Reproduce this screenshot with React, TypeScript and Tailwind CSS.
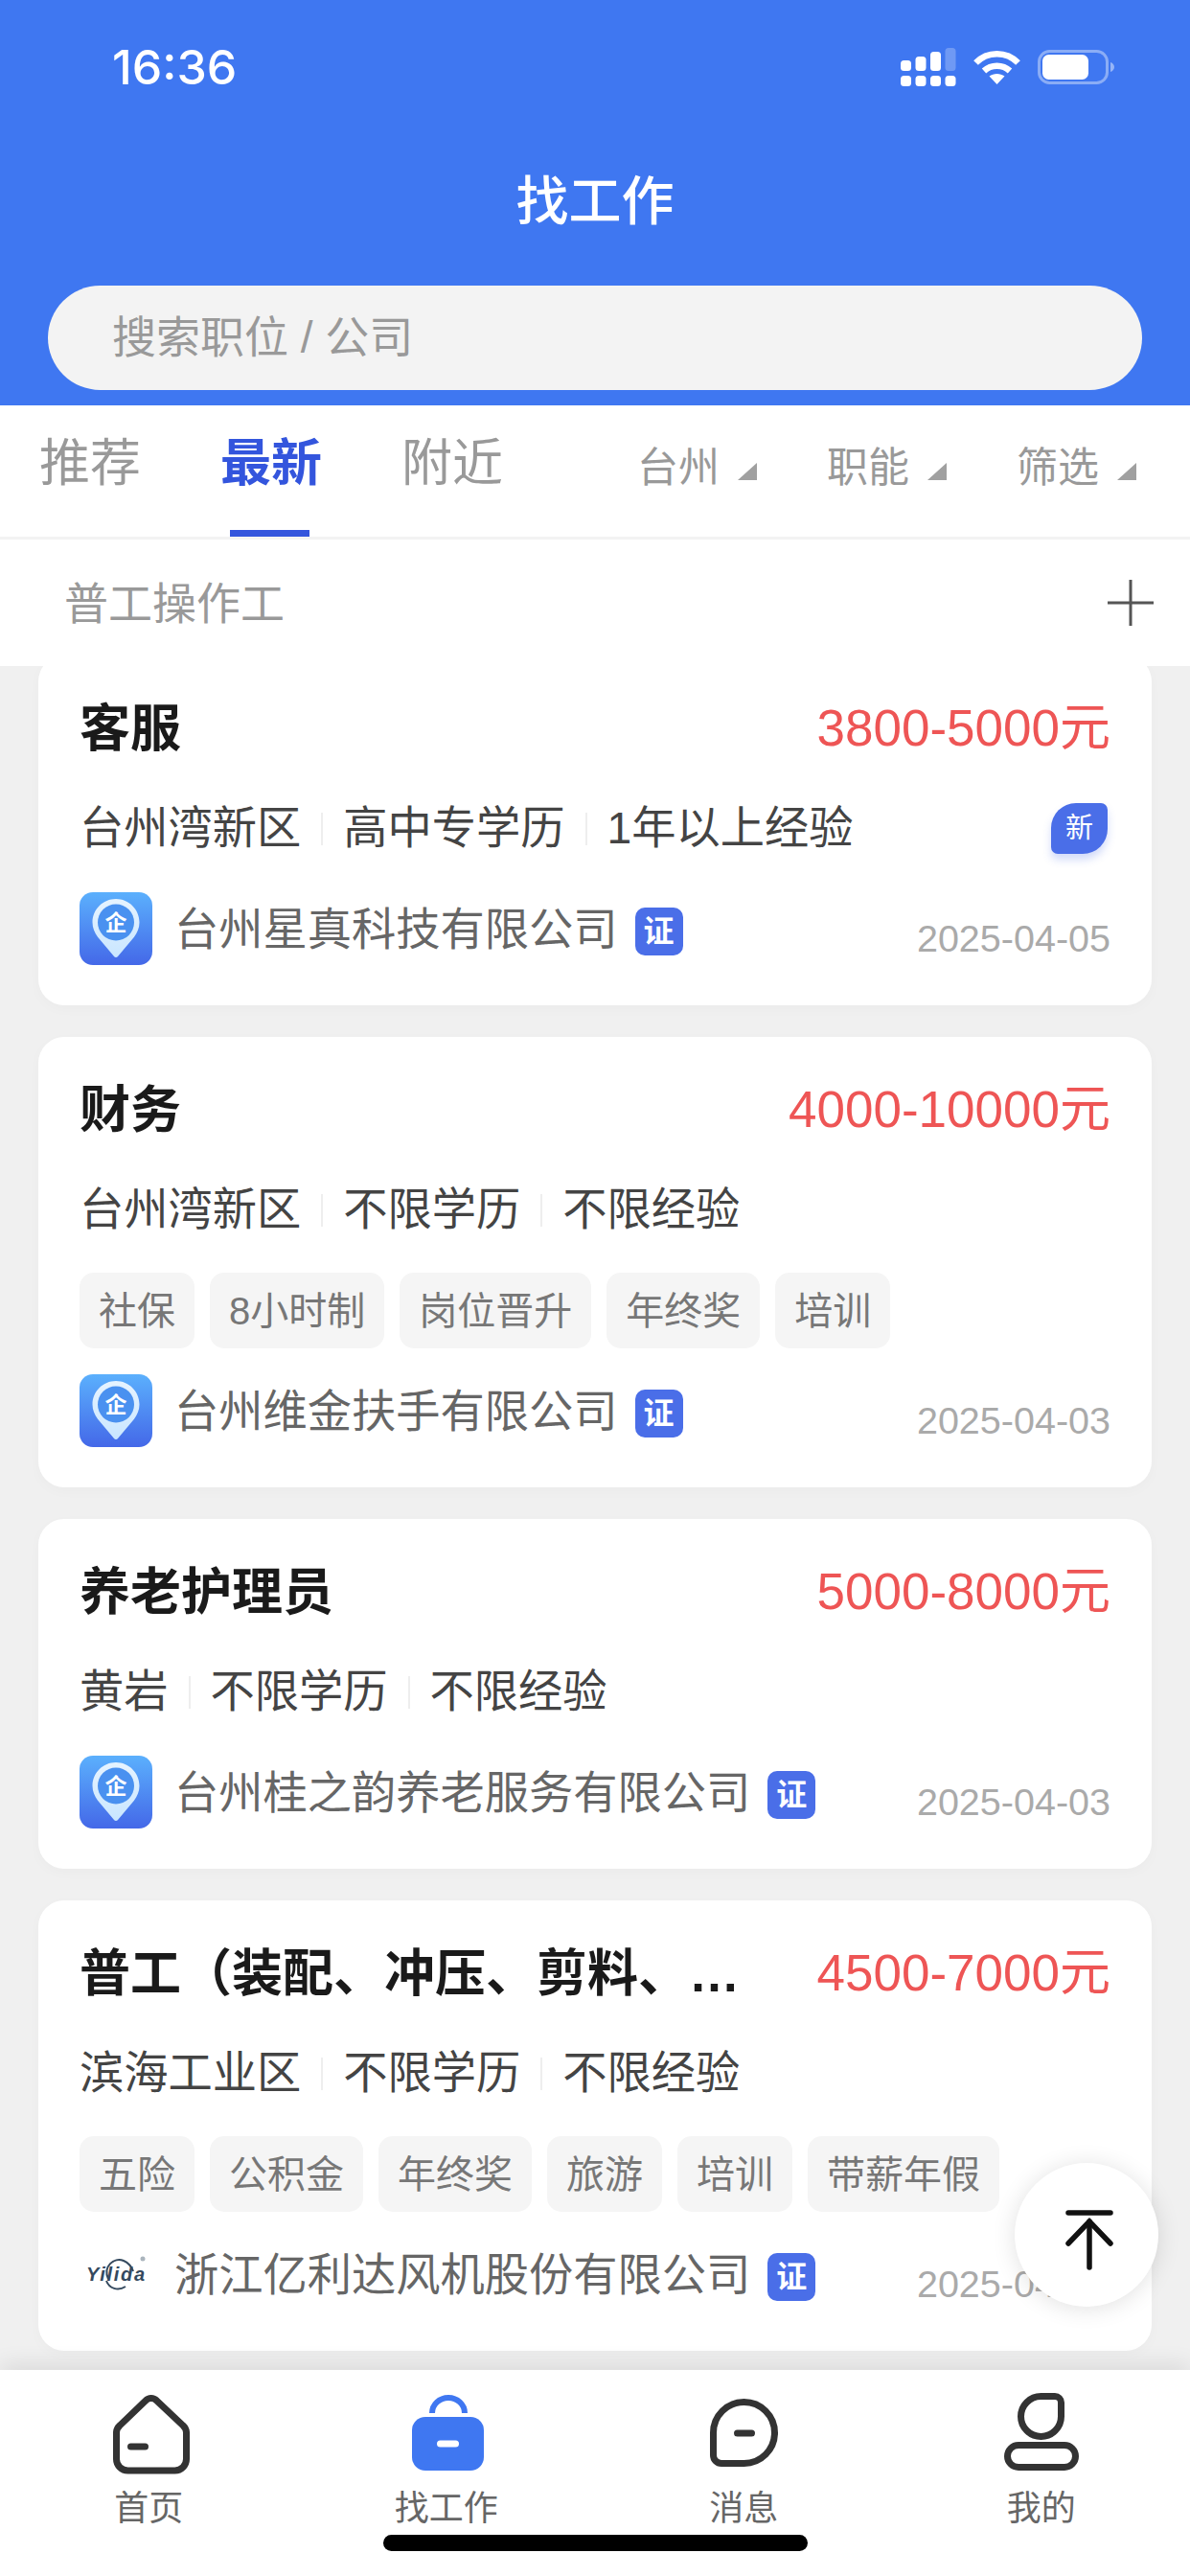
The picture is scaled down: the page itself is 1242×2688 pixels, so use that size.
type Job = {
  title: string
  salary: string
  meta: string[]
  tags?: string[]
  company: string
  date: string
  logo: 'pin' | 'yilida'
  isNew?: boolean
}

const jobs: Job[] = [
  {
    title: '客服',
    salary: '3800-5000元',
    meta: ['台州湾新区', '高中专学历', '1年以上经验'],
    company: '台州星真科技有限公司',
    date: '2025-04-05',
    logo: 'pin',
    isNew: true,
  },
  {
    title: '财务',
    salary: '4000-10000元',
    meta: ['台州湾新区', '不限学历', '不限经验'],
    tags: ['社保', '8小时制', '岗位晋升', '年终奖', '培训'],
    company: '台州维金扶手有限公司',
    date: '2025-04-03',
    logo: 'pin',
  },
  {
    title: '养老护理员',
    salary: '5000-8000元',
    meta: ['黄岩', '不限学历', '不限经验'],
    company: '台州桂之韵养老服务有限公司',
    date: '2025-04-03',
    logo: 'pin',
  },
  {
    title: '普工（装配、冲压、剪料、…',
    salary: '4500-7000元',
    meta: ['滨海工业区', '不限学历', '不限经验'],
    tags: ['五险', '公积金', '年终奖', '旅游', '培训', '带薪年假'],
    company: '浙江亿利达风机股份有限公司',
    date: '2025-04-03',
    logo: 'yilida',
  },
]

function SignalIcon() {
  return (
    <svg width="58" height="41" viewBox="0 0 58 41" fill="#fff">
      <rect x="0" y="13" width="11" height="11" rx="3.5" />
      <rect x="15.5" y="9" width="11" height="15" rx="3.5" />
      <rect x="31" y="4" width="11" height="20" rx="3.5" />
      <rect x="46.5" y="0" width="11" height="24" rx="3.5" fillOpacity="0.25" />
      <rect x="0" y="29" width="11" height="11" rx="3.5" />
      <rect x="15.5" y="29" width="11" height="11" rx="3.5" />
      <rect x="31" y="29" width="11" height="11" rx="3.5" />
      <rect x="46.5" y="29" width="11" height="11" rx="3.5" />
    </svg>
  )
}

function WifiIcon() {
  return (
    <svg width="49" height="36" viewBox="0 0 49 36" fill="none" stroke="#fff" strokeWidth="6.5">
      <path d="M2.5 13.5C14.5 1 34.5 1 46.5 13.5" />
      <path d="M11 22c7.5-7 19.5-7 27 0" />
      <path d="M24.5 36 16.5 27.5c4.5-3.5 11.5-3.5 16 0Z" fill="#fff" stroke="none" />
    </svg>
  )
}

function BatteryIcon() {
  return (
    <svg width="80" height="36" viewBox="0 0 80 36" fill="none">
      <rect x="1.5" y="1.5" width="71" height="33" rx="11" stroke="#fff" strokeOpacity="0.4" strokeWidth="3" />
      <rect x="5" y="5" width="48" height="26" rx="6.5" fill="#fff" />
      <path d="M76 13c2.5.8 4 2.8 4 5s-1.5 4.2-4 5Z" fill="#fff" fillOpacity="0.45" />
    </svg>
  )
}

function PinLogo() {
  return (
    <svg width="76" height="76" viewBox="0 0 76 76" className="-mt-[2px] shrink-0">
      <defs>
        <linearGradient id="pinBg" x1="0" y1="0" x2="0" y2="1">
          <stop offset="0" stopColor="#5bb0fd" />
          <stop offset="1" stopColor="#4468e8" />
        </linearGradient>
        <linearGradient id="pinBody" x1="0" y1="0" x2="0" y2="1">
          <stop offset="0" stopColor="#e6f3ff" />
          <stop offset="1" stopColor="#c9e6ff" />
        </linearGradient>
      </defs>
      <rect width="76" height="76" rx="14" fill="url(#pinBg)" />
      <path
        d="M38 7c13.5 0 24.5 11 24.5 24.5 0 6-2.2 10.5-5.5 15.2L40 67a2.6 2.6 0 0 1-4 0L19 46.7c-3.3-4.7-5.5-9.2-5.5-15.2C13.5 18 24.5 7 38 7Z"
        fill="url(#pinBody)"
      />
      <circle cx="38" cy="31.5" r="19" fill="#4a91f0" />
      <text
        x="38"
        y="39.5"
        textAnchor="middle"
        fill="#fff"
        fontSize="23"
        fontWeight="700"
        fontFamily="'Noto Sans CJK SC', sans-serif"
      >
        企
      </text>
    </svg>
  )
}

function YilidaLogo() {
  return (
    <svg width="76" height="76" viewBox="0 0 76 76" className="-mt-[2px] shrink-0">
      <path d="M30 43C24 30 36 20 46 24c5 2 9 7 10 11" fill="none" stroke="#34495e" strokeWidth="2" />
      <path d="M28 45c3 8 12 11 20 6" fill="none" stroke="#34495e" strokeWidth="2" />
      <text
        x="7"
        y="45"
        fill="#34495e"
        fontSize="20"
        fontWeight="700"
        fontStyle="italic"
        textLength="61"
        fontFamily="'Liberation Sans', sans-serif"
      >
        Yilida
      </text>
      <circle cx="66" cy="22" r="2.5" fill="#aab4bd" />
    </svg>
  )
}

function JobCard({ job }: { job: Job }) {
  return (
    <div className="flex flex-col rounded-[27px] bg-white px-[43px] pt-[23px] pb-[27px] shadow-[0_4px_14px_rgba(0,0,0,0.025)]">
      <div className="flex h-[105px] items-center justify-between">
        <span className="mt-[2px] text-[53px] font-bold text-[#1a1a1a]">{job.title}</span>
        <span className="shrink-0 text-[53px] text-[#ee5555]">{job.salary}</span>
      </div>

      <div className="flex h-[105px] items-center text-[46.25px] text-[#444]">
        {job.meta.map((item, i) => (
          <div key={item} className="flex items-center">
            {i > 0 && <span className="mx-[21px] h-[34px] w-[2px] bg-[#eee]" />}
            <span>{item}</span>
          </div>
        ))}
        {job.isNew && (
          <span className="ml-auto mr-[3px] flex h-[53px] w-[59px] items-center justify-center rounded-tl-[26px] rounded-tr-[7px] rounded-br-[26px] rounded-bl-[7px] bg-[#4a6ee8] text-[29px] text-white shadow-[0_6px_8px_rgba(74,110,232,0.25)]">
            新
          </span>
        )}
      </div>

      {job.tags && (
        <div className="flex h-[105px] items-center gap-[16px]">
          {job.tags.map((tag) => (
            <span
              key={tag}
              className="flex h-[79px] items-center rounded-[15px] bg-[#f5f5f5] px-[20px] text-[40px] text-[#777]"
            >
              {tag}
            </span>
          ))}
        </div>
      )}

      <div className="flex h-[105px] items-center">
        {job.logo === 'pin' ? <PinLogo /> : <YilidaLogo />}
        <span className="ml-[23px] mt-[2px] text-[46.25px] text-[#666]">{job.company}</span>
        <span className="ml-[18px] mt-[5px] flex h-[50px] w-[50px] items-center justify-center rounded-[10px] bg-[#4a6ee8] text-[32px] font-bold text-white">
          证
        </span>
        <span className="ml-auto mt-[20px] text-[39.5px] text-[#aaa]">{job.date}</span>
      </div>
    </div>
  )
}

function Triangle() {
  return (
    <svg width="20" height="18" viewBox="0 0 20 18" className="ml-[19px] mt-[20px]">
      <polygon points="20,0 20,18 0,18" fill="#a0a0a0" />
    </svg>
  )
}

function HomeIcon() {
  return (
    <svg width="80" height="84" viewBox="0 0 80 84" fill="none" stroke="#333" strokeWidth="7" strokeLinecap="round">
      <path d="M34 7a8 8 0 0 1 11.5 0L73 33a10 10 0 0 1 3.5 7V68a12 12 0 0 1-12 12H15.5a12 12 0 0 1-12-12V40a10 10 0 0 1 3.5-7Z" />
      <path d="M18.5 55H33.5" />
    </svg>
  )
}

function BagIcon() {
  return (
    <svg width="76" height="82" viewBox="0 0 76 82" fill="none">
      <path d="M21 20a17 16 0 0 1 34 0" stroke="#3f77f1" strokeWidth="6" />
      <rect x="0" y="24" width="75" height="56" rx="14" fill="#3f77f1" />
      <path d="M29.5 52H45.5" stroke="#fff" strokeWidth="7" strokeLinecap="round" />
    </svg>
  )
}

function MessageIcon() {
  return (
    <svg width="71" height="71" viewBox="0 0 71 71" fill="none" stroke="#333" strokeWidth="7" strokeLinecap="round">
      <path d="M35.5 3.5a32 32 0 1 1 0 64H12a8.5 8.5 0 0 1-8.5-8.500V35.5a32 32 0 0 1 32-32Z" />
      <path d="M28.5 36H43.5" />
    </svg>
  )
}

function UserIcon() {
  return (
    <svg width="78" height="81" viewBox="0 0 78 81" fill="none" stroke="#333" strokeWidth="7">
      <path d="M38.5 3.5H53a6.5 6.5 0 0 1 6.5 6.5V24.5a21 21 0 1 1-21-21Z" />
      <rect x="3.5" y="54.5" width="71" height="23" rx="11.5" />
    </svg>
  )
}

const navItems = [
  { label: '首页', icon: <HomeIcon />, offset: 'pt-[25px] pl-[6px]' },
  { label: '找工作', icon: <BagIcon />, offset: 'pt-[25px] pl-[4px]' },
  { label: '消息', icon: <MessageIcon />, offset: 'pt-[30px]' },
  { label: '我的', icon: <UserIcon />, offset: 'pt-[24px]' },
]

export default function App() {
  return (
    <div className="relative flex h-screen w-full flex-col overflow-hidden bg-[#f0f0f0] font-['Liberation_Sans','Noto_Sans_CJK_SC',sans-serif]">
      {/* Blue header */}
      <div className="h-[423px] shrink-0 bg-[#3f77f1]">
        <div className="flex h-[140px] items-center justify-between pl-[117px] pr-[79px]">
          <span className="font-['Inter'] text-[50px] font-medium text-white">16:36</span>
          <div className="flex items-center">
            <SignalIcon />
            <div className="ml-[18px]">
              <WifiIcon />
            </div>
            <div className="ml-[18px]">
              <BatteryIcon />
            </div>
          </div>
        </div>
        <div className="flex h-[140px] items-center justify-center text-[55px] font-medium text-white">找工作</div>
        <div className="mx-[50px] mt-[18px] flex h-[109px] items-center rounded-full bg-[#f3f3f3] pl-[67px] text-[46px] text-[#999]">
          搜索职位 / 公司
        </div>
      </div>

      {/* Tabs and filters */}
      <div className="flex h-[140px] shrink-0 border-b-[3px] border-[#f3f3f3] bg-white pl-[41px] pr-[56px]">
        <div className="flex gap-[83px] pt-[31px] text-[53px] leading-[60px] text-[#999]">
          <span>推荐</span>
          <span className="relative h-[106px] font-bold text-[#3355dd]">
            最新
            <span className="absolute bottom-0 left-[10px] h-[7px] w-[83px] bg-[#3355dd]" />
          </span>
          <span>附近</span>
        </div>
        <div className="ml-auto flex gap-[73px] pt-[40px] text-[43px] leading-[50px] text-[#999]">
          {['台州', '职能', '筛选'].map((label) => (
            <div key={label} className="flex items-start">
              <span>{label}</span>
              <Triangle />
            </div>
          ))}
        </div>
      </div>

      <div className="z-10 flex h-[132px] shrink-0 items-center justify-between bg-white pl-[67px] pr-[38px] text-[46px] text-[#999]">
        <span className="mt-[2px]">普工操作工</span>
        <svg width="48" height="48" viewBox="0 0 48 48" stroke="#555" strokeWidth="3">
          <path d="M0 24H48M24 0V48" />
        </svg>
      </div>

      {/* Job list, scrolled a little so the first card sits under the row above */}
      <div className="min-h-0 flex-1 overflow-hidden">
        <div className="-mt-[11px] flex flex-col gap-[33px] px-[40px]">
          {jobs.map((job) => (
            <JobCard key={job.title} job={job} />
          ))}
        </div>
      </div>

      {/* Bottom nav */}
      <div className="z-10 grid h-[215px] shrink-0 grid-cols-4 bg-white shadow-[0_-6px_22px_rgba(0,0,0,0.09)]">
        {navItems.map((item) => (
          <div key={item.label} className="flex flex-col items-center">
            <div className={`flex h-[110px] items-start ${item.offset}`}>{item.icon}</div>
            <span className="mt-[13px] text-[36px] leading-[44px] text-[#666]">{item.label}</span>
          </div>
        ))}
      </div>

      <div className="absolute bottom-[26px] left-[400px] z-20 h-[17px] w-[443px] rounded-full bg-black" />

      {/* Back to top */}
      <div className="absolute left-[1059px] top-[2257px] z-20 flex h-[150px] w-[150px] items-center justify-center rounded-full bg-white shadow-[0_2px_24px_rgba(0,0,0,0.12)]">
        <svg width="50" height="64" viewBox="0 0 50 64" fill="none" stroke="#111" strokeWidth="5.5" strokeLinecap="round" className="ml-[6px] mt-[12px]">
          <path d="M3 3H47" />
          <path d="M25 12V60" />
          <path d="M3 35 25 12 47 35" />
        </svg>
      </div>
    </div>
  )
}
